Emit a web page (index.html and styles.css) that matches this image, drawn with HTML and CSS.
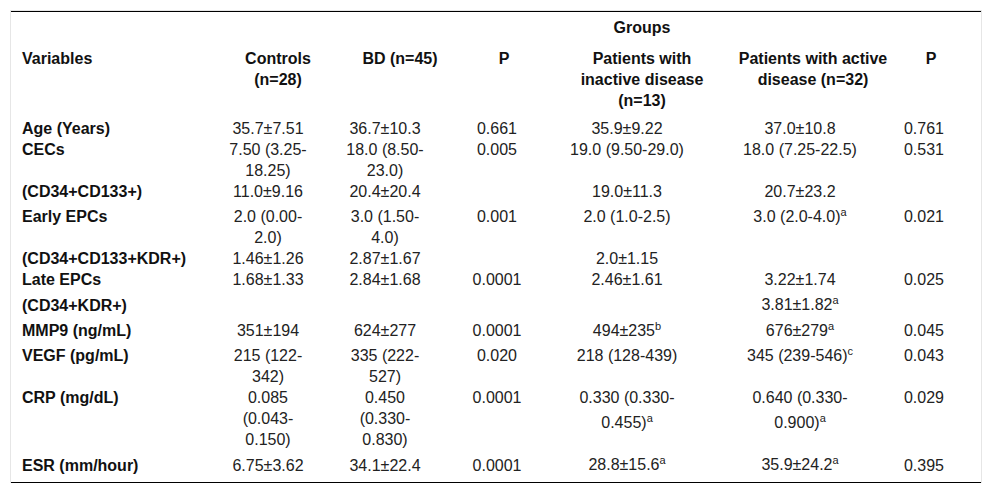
FILE: index.html
```html
<!DOCTYPE html>
<html lang="en">
<head>
<meta charset="utf-8">
<title>Groups table</title>
<link rel="stylesheet" href="styles.css">
</head>
<body>
<div class="frame">
<table class="data">
  <colgroup>
    <col class="w-var">
    <col class="w-ctl">
    <col class="w-bd">
    <col class="w-p1">
    <col class="w-ina">
    <col class="w-act">
    <col class="w-p2">
  </colgroup>
  <thead>
    <tr class="groups-row">
      <th></th><th></th><th></th><th></th>
      <th class="c-ina">Groups</th>
      <th></th><th></th>
    </tr>
    <tr class="head-row">
      <th class="c-var">Variables</th>
      <th class="c-ctl">Controls<br>(n=28)</th>
      <th class="c-bd">BD (n=45)</th>
      <th class="c-p1">P</th>
      <th class="c-ina">Patients with<br>inactive disease<br>(n=13)</th>
      <th class="c-act">Patients with active<br>disease (n=32)</th>
      <th class="c-p2">P</th>
    </tr>
  </thead>
  <tbody>
    <tr>
      <td class="c-var">Age (Years)</td><td class="c-ctl">35.7±7.51</td><td class="c-bd">36.7±10.3</td><td class="c-p1">0.661</td><td class="c-ina">35.9±9.22</td><td class="c-act">37.0±10.8</td><td class="c-p2">0.761</td>
    </tr>
    <tr>
      <td class="c-var">CECs</td><td class="c-ctl">7.50 (3.25-<br>18.25)</td><td class="c-bd">18.0 (8.50-<br>23.0)</td><td class="c-p1">0.005</td><td class="c-ina">19.0 (9.50-29.0)</td><td class="c-act">18.0 (7.25-22.5)</td><td class="c-p2">0.531</td>
    </tr>
    <tr>
      <td class="c-var">(CD34+CD133+)</td><td class="c-ctl">11.0±9.16</td><td class="c-bd">20.4±20.4</td><td class="c-p1"></td><td class="c-ina">19.0±11.3</td><td class="c-act">20.7±23.2</td><td class="c-p2"></td>
    </tr>
    <tr>
      <td class="c-var">Early EPCs</td><td class="c-ctl">2.0 (0.00-<br>2.0)</td><td class="c-bd">3.0 (1.50-<br>4.0)</td><td class="c-p1">0.001</td><td class="c-ina">2.0 (1.0-2.5)</td><td class="c-act">3.0 (2.0-4.0)<sup>a</sup></td><td class="c-p2">0.021</td>
    </tr>
    <tr>
      <td class="c-var">(CD34+CD133+KDR+)</td><td class="c-ctl">1.46±1.26</td><td class="c-bd">2.87±1.67</td><td class="c-p1"></td><td class="c-ina">2.0±1.15</td><td class="c-act"></td><td class="c-p2"></td>
    </tr>
    <tr>
      <td class="c-var">Late EPCs</td><td class="c-ctl">1.68±1.33</td><td class="c-bd">2.84±1.68</td><td class="c-p1">0.0001</td><td class="c-ina">2.46±1.61</td><td class="c-act">3.22±1.74</td><td class="c-p2">0.025</td>
    </tr>
    <tr>
      <td class="c-var">(CD34+KDR+)</td><td class="c-ctl"></td><td class="c-bd"></td><td class="c-p1"></td><td class="c-ina"></td><td class="c-act">3.81±1.82<sup>a</sup></td><td class="c-p2"></td>
    </tr>
    <tr>
      <td class="c-var">MMP9 (ng/mL)</td><td class="c-ctl">351±194</td><td class="c-bd">624±277</td><td class="c-p1">0.0001</td><td class="c-ina">494±235<sup>b</sup></td><td class="c-act">676±279<sup>a</sup></td><td class="c-p2">0.045</td>
    </tr>
    <tr>
      <td class="c-var">VEGF (pg/mL)</td><td class="c-ctl">215 (122-<br>342)</td><td class="c-bd">335 (222-<br>527)</td><td class="c-p1">0.020</td><td class="c-ina">218 (128-439)</td><td class="c-act">345 (239-546)<sup>c</sup></td><td class="c-p2">0.043</td>
    </tr>
    <tr>
      <td class="c-var">CRP (mg/dL)</td><td class="c-ctl">0.085<br>(0.043-<br>0.150)</td><td class="c-bd">0.450<br>(0.330-<br>0.830)</td><td class="c-p1">0.0001</td><td class="c-ina">0.330 (0.330-<br>0.455)<sup>a</sup></td><td class="c-act">0.640 (0.330-<br>0.900)<sup>a</sup></td><td class="c-p2">0.029</td>
    </tr>
    <tr>
      <td class="c-var">ESR (mm/hour)</td><td class="c-ctl">6.75±3.62</td><td class="c-bd">34.1±22.4</td><td class="c-p1">0.0001</td><td class="c-ina">28.8±15.6<sup>a</sup></td><td class="c-act">35.9±24.2<sup>a</sup></td><td class="c-p2">0.395</td>
    </tr>
  </tbody>
</table>
</div>
</body>
</html>
```
FILE: styles.css
```css
html, body {
  margin: 0;
  padding: 0;
  background: #ffffff;
}

body {
  padding: 10px;
  font-family: "Liberation Sans", Arial, sans-serif;
  font-size: 16px;
  line-height: 21px;
  color: #222222;
}

.frame {
  width: 970px;
  border: 1px solid #e6e6e6;
  border-bottom: 0;
}

.data {
  width: 970px;
  table-layout: fixed;
  border-collapse: collapse;
  border-top: 1px solid #000000;
  border-bottom: 1px solid #000000;
}

.w-var { width: 214px; }
.w-ctl { width: 106px; }
.w-bd  { width: 138px; }
.w-p1  { width: 78px; }
.w-ina { width: 190px; }
.w-act { width: 152px; }
.w-p2  { width: 92px; }

th, td {
  padding: 0;
  text-align: center;
  vertical-align: baseline;
  white-space: nowrap;
}

th {
  font-weight: bold;
  color: #111111;
}

.groups-row th {
  padding-top: 5px;
}

.head-row th {
  padding-top: 10px;
  padding-bottom: 7px;
}

.head-row th.c-p1,
.head-row th.c-p2 {
  padding-right: 8px;
}

.c-var {
  text-align: left;
  padding-left: 11px;
}

td.c-var {
  font-weight: bold;
  color: #111111;
}

td.c-ctl { padding-right: 20px; }
td.c-bd  { padding-right: 30px; }
td.c-p1  { padding-right: 22px; }
td.c-ina { padding-right: 30px; }
td.c-act { padding-right: 26px; }
td.c-p2  { padding-right: 22px; }

tbody tr:last-child td {
  padding-bottom: 6px;
}

sup {
  font-size: 11px;
  line-height: 20px;
  vertical-align: super;
}
```
